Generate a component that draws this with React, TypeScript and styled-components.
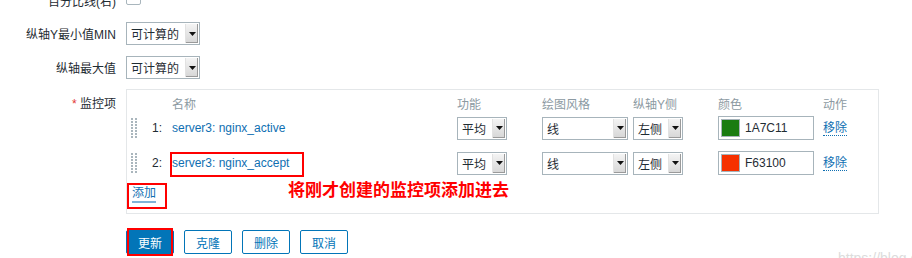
import styled, { createGlobalStyle } from 'styled-components'

const GlobalStyle = createGlobalStyle`
    html, body {
        margin: 0;
        padding: 0;
        background: #fff;
        overflow: hidden;
    }
    body {
        font-family: "Liberation Sans", Arial, "Noto Sans CJK SC", sans-serif;
        font-size: 12px;
        color: #1f2c33;
    }
`

const items = [
    { name: 'server3: nginx_active', color: '1A7C11', swatch: '#1a7c11' },
    { name: 'server3: nginx_accept', color: 'F63100', swatch: '#f63100' },
]

function Select({ value, width }: { value: string; width: number }) {
    return (
        <SelectBox $width={width}>
            <SelectValue>{value}</SelectValue>
            <SelectArrow>
                <svg width='7' height='4' viewBox='0 0 7 4'>
                    <path d='M0 0 H7 L3.5 4 Z' fill='#111' />
                </svg>
            </SelectArrow>
        </SelectBox>
    )
}

function DragHandle() {
    const dots = []
    for (let r = 0; r < 7; r++) {
        dots.push(<rect key={'a' + r} x='0' y={r * 3} width='2' height='2' fill='#aab6bd' />)
        dots.push(<rect key={'b' + r} x='4' y={r * 3} width='2' height='2' fill='#aab6bd' />)
    }
    return (
        <svg width='6' height='20' viewBox='0 0 6 20'>
            {dots}
        </svg>
    )
}

export default function App() {
    return (
        <Page>
            <GlobalStyle />
            <Form>
                <Label>百分比线(右)</Label>
                <Checkbox />

                <Label>纵轴Y最小值MIN</Label>
                <Select value='可计算的' width={74} />

                <Label>纵轴最大值</Label>
                <Select value='可计算的' width={74} />

                <Label $top>
                    <Required>*</Required> 监控项
                </Label>
                <ItemsBox>
                    <HeadRow>
                        <span />
                        <span />
                        <span>名称</span>
                        <span>功能</span>
                        <span>绘图风格</span>
                        <span>纵轴Y侧</span>
                        <span>颜色</span>
                        <span>动作</span>
                    </HeadRow>

                    <RowList>
                        {items.map((item, i) => (
                            <ItemRow key={item.name}>
                                <DragHandle />
                                <span>{i + 1}:</span>
                                <ItemLink>{item.name}</ItemLink>
                                <Select value='平均' width={50} />
                                <Select value='线' width={86} />
                                <Select value='左侧' width={50} />
                                <ColorInput>
                                    <Swatch $color={item.swatch} />
                                    {item.color}
                                </ColorInput>
                                <DottedLink>移除</DottedLink>
                            </ItemRow>
                        ))}
                    </RowList>

                    <AddRow>
                        <AddLink>添加</AddLink>
                    </AddRow>

                    <Mark $left={43} $top={62} $width={134} $height={25} />
                    <Mark $left={0} $top={93} $width={40} $height={26} />
                    <Note>将刚才创建的监控项添加进去</Note>
                </ItemsBox>

                <span />
                <Buttons>
                    <PrimaryButton>更新</PrimaryButton>
                    <Button>克隆</Button>
                    <Button>删除</Button>
                    <Button>取消</Button>
                </Buttons>
            </Form>
            <Watermark>https://blog.csdn.net</Watermark>
        </Page>
    )
}

const Page = styled.div`
    position: relative;
    width: 912px;
    height: 258px;
    overflow: hidden;
`

const Form = styled.div`
    display: grid;
    grid-template-columns: 116px 753px;
    grid-template-rows: 21px 23px 23px auto auto;
    column-gap: 10px;
    row-gap: 11px;
    align-items: center;
    margin-top: -10px;
`

const Label = styled.div<{ $top?: boolean }>`
    text-align: right;
    white-space: nowrap;
    align-self: ${(p) => (p.$top ? 'start' : 'center')};
    padding-top: ${(p) => (p.$top ? '4px' : '0')};
`

const Required = styled.span`
    color: #e33734;
`

const Checkbox = styled.div`
    align-self: start;
    width: 13px;
    height: 13px;
    border: 1px solid #a9b6bd;
    border-radius: 2px;
    background: #fff;
`

const SelectBox = styled.div<{ $width: number }>`
    display: flex;
    align-items: stretch;
    box-sizing: border-box;
    width: ${(p) => p.$width}px;
    height: 23px;
    border: 1px solid #a7b4bb;
    background: #fff;
`

const SelectValue = styled.div`
    flex: 1;
    display: flex;
    align-items: center;
    padding-left: 4px;
    white-space: nowrap;
    overflow: hidden;
    color: #1f2c33;
`

const SelectArrow = styled.div`
    width: 12px;
    margin: 1px;
    display: flex;
    align-items: center;
    justify-content: center;
    background: linear-gradient(to bottom, #f4f4f4, #d6d6d6);
    border-left: 1px solid #e2e2e2;
    box-shadow: inset -1px -1px 0 #9a9a9a;
`

const ItemsBox = styled.div`
    position: relative;
    display: flex;
    flex-direction: column;
    box-sizing: border-box;
    width: 753px;
    height: 125px;
    margin-top: -1px;
    border: 1px solid #e4e7e9;
    padding: 3px 0 0 4px;
`

const columns = '21px 20px 285px 85px 91px 85px 105px 1fr'

const HeadRow = styled.div`
    display: grid;
    grid-template-columns: ${columns};
    align-items: center;
    height: 20px;
    color: #8c9aa2;
    white-space: nowrap;
`

const RowList = styled.div`
    display: flex;
    flex-direction: column;
    gap: 5px;
`

const ItemRow = styled.div`
    display: grid;
    grid-template-columns: ${columns};
    align-items: center;
    height: 30px;
    white-space: nowrap;
`

const ItemLink = styled.span`
    color: #0f6fb2;
`

const DottedLink = styled.span`
    justify-self: start;
    color: #0f6fb2;
    border-bottom: 1px dotted #0f6fb2;
    line-height: 14px;
`

const ColorInput = styled.div`
    box-sizing: border-box;
    width: 96px;
    height: 24px;
    border: 1px solid #a7b4bb;
    display: flex;
    align-items: center;
    gap: 5px;
    padding-left: 2px;
    color: #1f2c33;
`

const Swatch = styled.div<{ $color: string }>`
    box-sizing: border-box;
    width: 19px;
    height: 18px;
    border: 1px solid #a7b4bb;
    background: ${(p) => p.$color};
`

const AddRow = styled.div`
    display: flex;
    align-items: center;
    height: 26px;
    margin-top: 3px;
    padding-left: 1px;
`

const AddLink = styled.span`
    color: #0f6fb2;
    border-bottom: 2px solid #7fb3d8;
    line-height: 15px;
`

const Mark = styled.div<{ $left: number; $top: number; $width: number; $height: number }>`
    position: absolute;
    left: ${(p) => p.$left}px;
    top: ${(p) => p.$top}px;
    width: ${(p) => p.$width}px;
    height: ${(p) => p.$height}px;
    box-sizing: border-box;
    border: 2px solid #f00;
`

const Note = styled.div`
    position: absolute;
    left: 161px;
    top: 89px;
    font-family: "Noto Sans CJK SC", sans-serif;
    font-size: 17px;
    font-weight: 700;
    color: #f00;
    white-space: nowrap;
    line-height: 20px;
`

const Buttons = styled.div`
    display: flex;
    gap: 10px;
    margin-top: 5px;
`

const Button = styled.div`
    position: relative;
    box-sizing: border-box;
    width: 48px;
    height: 24px;
    display: flex;
    align-items: center;
    justify-content: center;
    border: 1px solid #0275b8;
    border-radius: 2px;
    background: #fff;
    color: #0275b8;
    font-size: 12px;
`

const PrimaryButton = styled(Button)`
    background: #0275b8;
    color: #fff;

    &::after {
        content: '';
        position: absolute;
        left: 0;
        right: 0;
        top: -3px;
        bottom: -3px;
        border: 2px solid #f00;
    }
`

const Watermark = styled.div`
    position: absolute;
    left: 838px;
    top: 250px;
    font-size: 14px;
    color: #dcdcdc;
    white-space: nowrap;
`
